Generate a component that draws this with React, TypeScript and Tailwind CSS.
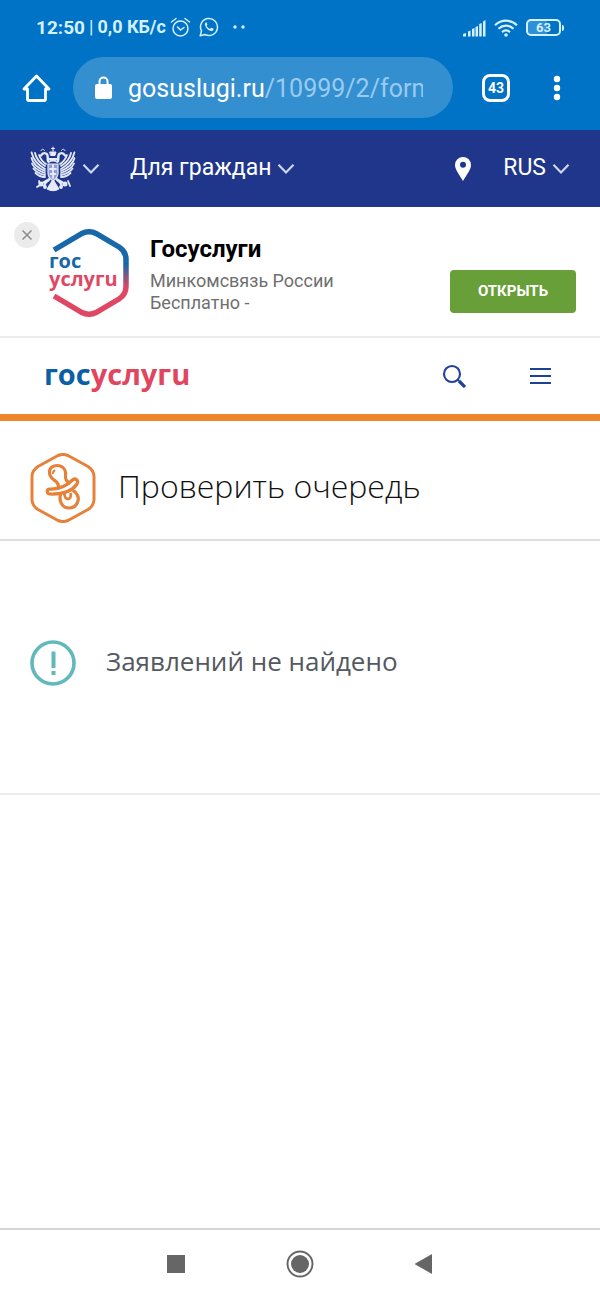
import type { ReactNode } from "react";

function Chevron() {
  return (
    <svg width="18" height="12" viewBox="0 0 18 12" fill="none" aria-hidden="true">
      <path d="M1.5 1.8 9 9.5l7.5-7.7" stroke="#ccd8f5" strokeWidth="2.2" />
    </svg>
  );
}

const FEATHERS = [
  "M15 23C8 19 3 13 1.6 6.5",
  "M15 25C8 22 3 18 1.5 12",
  "M15 27C9 25 4 22 2 17.5",
  "M15 29C10 28 6 26 3.5 22.5",
  "M15 31c-4 0-7-1.5-9.5-4",
  "M15 20C10 17 6 12 5 7",
  "M16 18c-3-2-6-6-7-9",
];

function Eagle() {
  const wing = (
    <g>
      {FEATHERS.map((d) => (
        <path key={d} d={d} />
      ))}
      <path d="M18 15c-1-3 1-6-2-7.5-2-.8-4 .2-5 2" strokeWidth="2.4" />
      <path d="M11 4.5c1-2 3-1.5 3.5 0" strokeWidth="1" />
      <path d="M19 33c-3 2-6 3-8 5m8-4c-2 1-4 3-5 6" strokeWidth="2" />
      <circle cx="11" cy="38" r="1.6" />
      <circle cx="15" cy="41" r="1" />
    </g>
  );
  return (
    <svg
      width="46"
      height="46"
      viewBox="0 0 46 46"
      fill="none"
      stroke="#e6ebfa"
      strokeWidth="1.8"
      strokeLinecap="round"
      aria-hidden="true"
    >
      {wing}
      <g transform="translate(46 0) scale(-1 1)">{wing}</g>
      <path d="M23 1v4M21.5 2.5h3" strokeWidth="1.2" />
      <path d="M20 6h6l-1 3.5h-4z" fill="#e6ebfa" strokeWidth="1" />
      <path d="M19 13h8M18.5 16c3-2 6-2 9 0" />
      <path d="M18 18h10v9c0 4-2 6-5 8-3-2-5-4-5-8z" fill="#8f9fd4" strokeWidth="1.2" />
      <path d="M23 19v13M20 23h6M20.5 28h5" />
      <path d="M22 35 17 43q6 3.5 12 0l-5-8z" fill="#e6ebfa" strokeWidth="1" />
      <path d="m9 35 1 4-3 2M38 35l2 5" />
    </svg>
  );
}

function StatusBar() {
  return (
    <div className="flex h-[57px] items-center justify-between px-9 pb-0.5 text-[#d3f1ff]">
      <div className="flex items-center text-lg font-bold">
        <span className="text-[19px]">12:50</span>
        <span className="mx-1 font-normal">|</span>
        <span>0,0 КБ/с</span>
        <svg className="ml-1" width="21" height="21" viewBox="0 0 21 21" fill="none" stroke="currentColor" strokeWidth="1.5" strokeLinecap="round" aria-hidden="true">
          <circle cx="10.5" cy="11.5" r="7.5" />
          <path d="M1.5 5 6 1.5M19.5 5 15 1.5M7.5 10l3 3 3.5-2.5" />
        </svg>
        <svg className="ml-2" width="20" height="20" viewBox="0 0 20 20" fill="none" stroke="currentColor" strokeWidth="1.5" aria-hidden="true">
          <path d="M1.2 18.8 2.5 14A8.5 8.5 0 1 1 6 17.5z" strokeLinejoin="round" />
          <path d="M7.2 5.2c-1 .5-1.7 1.6-1.2 3 1 3 3.2 5 5.8 5.8 1.3.3 2.4-.4 2.7-1.6.1-.4 0-.6-.3-.8l-1.7-.8c-.3-.1-.5 0-.7.2l-.7.9c-1.7-.7-2.8-1.7-3.5-3.2l.7-.9c.1-.2.1-.4 0-.6l-.7-1.7c-.1-.2-.2-.3-.4-.3z" fill="currentColor" stroke="none" />
        </svg>
        <svg className="ml-3.5" width="12" height="4" viewBox="0 0 12 4" fill="currentColor" aria-hidden="true">
          <circle cx="2" cy="2" r="1.7" />
          <circle cx="10" cy="2" r="1.7" />
        </svg>
      </div>
      <div className="flex items-center">
        <svg width="23" height="18" viewBox="0 0 23 18" fill="currentColor" aria-hidden="true">
          <path d="M0 17.5V15l3-1v3.5zM5 17.5v-5l2.500-1v6zM9 17.500V10l2.500-1v8.500zM12.500 17.500V8L15 7v10.500zM16.200 17.500V5l2.500-1v13.500zM20 17.500v-15L22.500 1v16.500z" />
        </svg>
        <svg className="ml-2" width="24" height="18" viewBox="0 0 24 18" fill="none" stroke="currentColor" strokeWidth="2.2" aria-hidden="true">
          <path d="M1 6.2C7.5.2 16.5.2 23 6.2M4.5 9.7c4.5-4 10.5-4 15 0M8 13.2c2.5-2.2 5.5-2.2 8 0" />
          <circle cx="12" cy="16" r="1.8" fill="currentColor" stroke="none" />
        </svg>
        <div className="ml-2 flex h-[17px] w-[35px] items-center justify-center rounded-[5px] border-2 border-current bg-linear-to-r from-[#2e91d8] from-60% to-transparent to-60% text-[13px] leading-none font-bold">
          63
        </div>
        <div className="ml-px h-1.5 w-0.5 rounded-r-sm bg-current" />
      </div>
    </div>
  );
}

function BrowserBar() {
  return (
    <div className="flex items-center pb-3 pl-[22px] pr-[39px]">
      <button type="button" aria-label="Главная страница">
        <svg width="29" height="30" viewBox="0 0 29 30" fill="none" stroke="white" strokeWidth="2.8" strokeLinejoin="round" aria-hidden="true">
          <path d="M2 16 14.5 3 27 16h-3.5v10.5q0 1-1 1h-16q-1 0-1-1V16z" />
        </svg>
      </button>
      <button type="button" className="ml-[22px] flex h-[61px] min-w-0 flex-1 items-center rounded-full bg-[#348fd0] pl-[22px] pr-[30px] text-left">
        <svg className="shrink-0" width="17" height="23" viewBox="0 0 17 23" aria-hidden="true">
          <path d="M4.5 9V5.5a4 4 0 0 1 8 0V9" fill="none" stroke="white" strokeWidth="2" />
          <rect y="8" width="17" height="15" rx="2" fill="white" />
        </svg>
        <span className="ml-4 overflow-hidden pt-0.5 text-[25px] leading-8 whitespace-nowrap text-white">
          gosuslugi.ru<span className="text-[#99cbf0]">/10999/2/form</span>
        </span>
      </button>
      <button type="button" aria-label="Вкладки" className="ml-[29px] flex size-7 items-center justify-center rounded-lg border-3 border-white text-sm font-bold text-white">
        43
      </button>
      <button type="button" aria-label="Меню браузера" className="ml-[43px]">
        <svg width="8" height="26" viewBox="0 0 8 26" fill="white" aria-hidden="true">
          <circle cx="4" cy="4" r="3.2" />
          <circle cx="4" cy="13" r="3.2" />
          <circle cx="4" cy="22" r="3.2" />
        </svg>
      </button>
    </div>
  );
}

function TopNav() {
  return (
    <nav className="flex h-[77px] items-center bg-[#20368a] px-[30px] text-[23px] text-white">
      <button type="button" aria-label="Госорганы" className="flex items-center gap-1.5">
        <Eagle />
        <Chevron />
      </button>
      <button type="button" className="ml-[30px] flex items-center gap-1.5">
        Для граждан
        <Chevron />
      </button>
      <button type="button" aria-label="Местоположение" className="ml-auto">
        <svg width="16" height="24" viewBox="0 0 16 24" aria-hidden="true">
          <path fillRule="evenodd" fill="white" d="M8 0a8 8 0 0 0-8 8c0 5 5 10.5 8 16 3-5.5 8-11 8-16a8 8 0 0 0-8-8zm0 4.8a3 3 0 1 1 0 6 3 3 0 0 1 0-6z" />
        </svg>
      </button>
      <button type="button" className="ml-8 flex items-center gap-1.5">
        RUS
        <Chevron />
      </button>
    </nav>
  );
}

function AppBanner() {
  return (
    <section className="flex h-[131px] border-b-2 border-[#ececec] pl-3.5 pr-6">
      <button type="button" aria-label="Закрыть" className="mt-[15px] flex size-[26px] items-center justify-center rounded-full bg-[#ebebeb]">
        <svg width="10" height="10" viewBox="0 0 10 10" stroke="#8b8b8b" strokeWidth="1.5" aria-hidden="true">
          <path d="m.5.5 9 9m0-9-9 9" />
        </svg>
      </button>
      <div className="relative ml-2 mt-[22px] h-[88px] w-[82px]">
        <svg width="82" height="88" viewBox="0 0 82 88" fill="none" aria-hidden="true">
          <defs>
            <linearGradient id="hex" x1="0" y1="0" x2="0" y2="88" gradientUnits="userSpaceOnUse">
              <stop offset="0.4" stopColor="#1767a9" />
              <stop offset="0.66" stopColor="#df4864" />
            </linearGradient>
          </defs>
          <path d="M6 21 34 4.5q7-3.5 14 0L71 18q7 4.5 7 12.5v27q0 8-7 12.5L48 83.5q-7 3.5-14 0L6 67" stroke="url(#hex)" strokeWidth="5.5" />
        </svg>
        <div className="absolute left-px top-[23px] font-['Open_Sans'] text-xl leading-[18px] font-bold">
          <div className="text-[#1767a9]">гос</div>
          <div className="text-[#df4864]">услугu</div>
        </div>
      </div>
      <div className="ml-5 mt-[27px]">
        <h2 className="text-2xl leading-[30px] font-bold text-black">Госуслуги</h2>
        <p className="mt-1.5 text-lg leading-[22px] text-[#6f6f6f]">
          Минкомсвязь России
          <br />
          Бесплатно -
        </p>
      </div>
      <button type="button" className="ml-auto mt-[63px] h-[43px] w-[126px] rounded bg-[#689f38] text-[15px] font-bold text-white">
        ОТКРЫТЬ
      </button>
    </section>
  );
}

function SiteHeader() {
  return (
    <header className="flex h-[83px] items-center border-b-7 border-[#ee842b] pl-11 pr-[49px]">
      <a href="#" className="pb-1 font-['Open_Sans'] text-[29px] leading-9 font-bold text-[#e1465f]">
        <span className="text-[#0b5fa5]">гос</span>услугu
      </a>
      <button type="button" aria-label="Поиск" className="ml-auto">
        <svg width="24" height="24" viewBox="0 0 24 24" fill="none" stroke="#1d429b" aria-hidden="true">
          <circle cx="10" cy="10" r="8" strokeWidth="2.1" />
          <path d="m15.500 15.500 1.500 1.500" strokeWidth="2.1" />
          <path d="m17 17 6 6" strokeWidth="3.2" />
        </svg>
      </button>
      <button type="button" aria-label="Меню" className="ml-16">
        <svg width="21" height="18" viewBox="0 0 21 18" stroke="#1d429b" strokeWidth="2" aria-hidden="true">
          <path d="M0 2h21M0 9h21M0 16h21" />
        </svg>
      </button>
    </header>
  );
}

function PageTitle() {
  return (
    <div className="flex h-[120px] items-center border-b-2 border-[#dfdfdf] pl-[30px] pt-4">
      <svg width="66" height="70" viewBox="0 0 66 70" fill="none" stroke="#e6813a" strokeWidth="3" strokeLinejoin="round" aria-hidden="true">
        <path d="M28 2.5q5-2 10 0l20 11q5.500 3.500 6 9.500v24q-.5 6-6 9.500l-20 11q-5 2-10 0l-20-11q-5.500-3.500-6-9.500V23q.5-6 6-9.500z" />
        <path d="M28.5 35.5c.5-4-1-6.500-4.500-8.500-6-4-6-12 0-14 7-2 12.500 2.500 11.500 9.500-.5 4 1 5.500 4.500 8" strokeWidth="3.2" />
        <path d="M23 21c-.3-2 .5-3.200 2.200-3.800" strokeWidth="2" />
        <path d="M19.5 36c9 .5 16-2 23-9 3-2.500 6.500.5 4.500 4C42 38.500 31 41.500 19.500 41c-3-.5-3-5 0-5z" strokeWidth="3.2" />
        <path d="M30.5 41.5c-2 7.500 2.500 13.500 8.500 13.500 8 0 12-9 7-15-1-1.500-2-2-3.500-2.500" strokeWidth="3.2" />
        <path d="M34.5 41c0 3 1.500 5 3.500 5s3.500-2.500 2.500-6" strokeWidth="2.8" />
      </svg>
      <h1 className="ml-[22px] pb-1 font-['Open_Sans'] text-[32px] leading-10 font-light text-[#111]">Проверить очередь</h1>
    </div>
  );
}

function Message() {
  return (
    <section className="flex h-[254px] items-center border-b-2 border-[#ececec] pb-2 pl-[30px]">
      <svg width="46" height="46" viewBox="0 0 46 46" fill="none" stroke="#61b9bc" aria-hidden="true">
        <circle cx="23" cy="23" r="21" strokeWidth="3.6" />
        <path d="M23.5 11.5V28M23.5 31v4" strokeWidth="4" />
      </svg>
      <p className="ml-[30px] pb-1 font-['Open_Sans'] text-[26px] leading-9 text-[#54595f]">Заявлений не найдено</p>
    </section>
  );
}

function NavButton({ label, children }: { label: string; children: ReactNode }) {
  return (
    <button type="button" aria-label={label} className="flex size-8 items-center justify-center">
      <svg width="28" height="28" viewBox="0 0 28 28" fill="#666" aria-hidden="true">
        {children}
      </svg>
    </button>
  );
}

export default function App() {
  return (
    <div className="flex min-h-screen flex-col bg-white font-[Roboto,sans-serif]">
      <div className="bg-[#0073c6]">
        <StatusBar />
        <BrowserBar />
      </div>
      <TopNav />
      <AppBanner />
      <SiteHeader />
      <main className="flex-1">
        <PageTitle />
        <Message />
      </main>
      <footer className="flex h-[71px] items-center justify-center gap-[92px] border-t-2 border-[#d5d5d5] pb-0.5">
        <NavButton label="Недавние">
          <rect x="5" y="5" width="18" height="18" />
        </NavButton>
        <NavButton label="Домой">
          <circle cx="14" cy="14" r="12.5" fill="none" stroke="#666" strokeWidth="2" />
          <circle cx="14" cy="14" r="9" />
        </NavButton>
        <NavButton label="Назад">
          <path d="M22 4v20L4.5 14z" />
        </NavButton>
      </footer>
    </div>
  );
}
